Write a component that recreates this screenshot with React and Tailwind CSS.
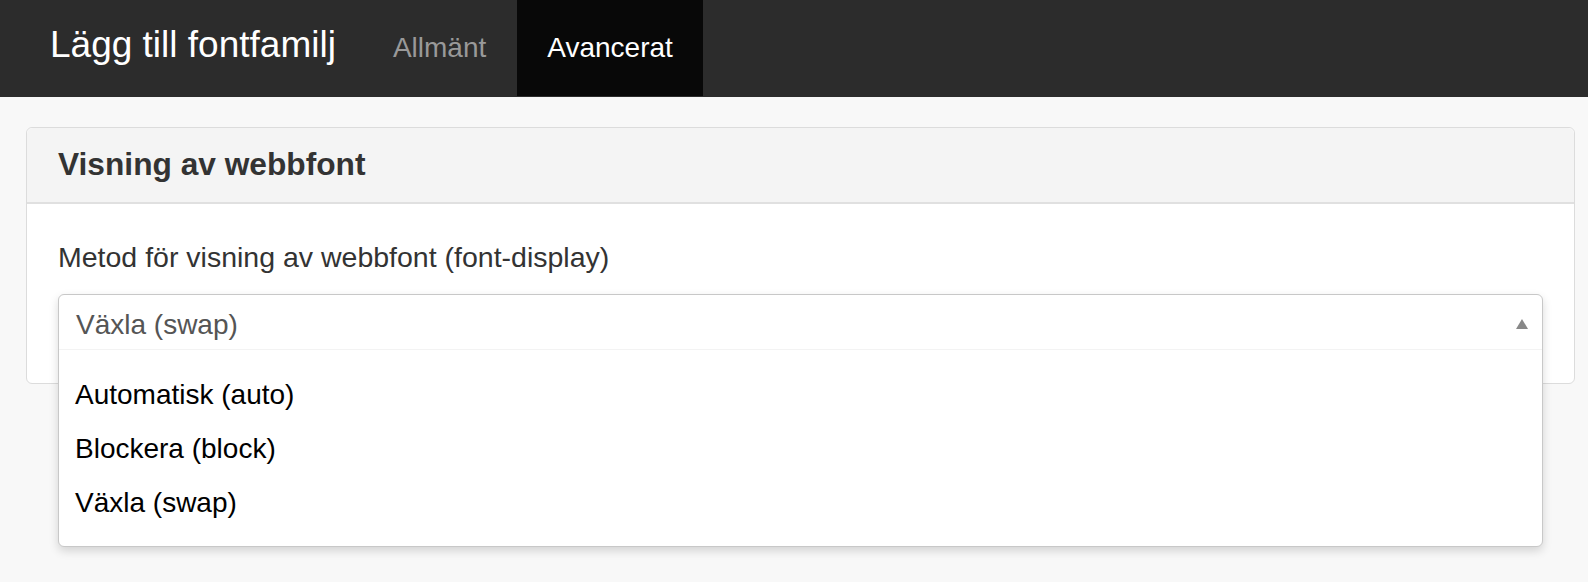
import React from 'react';

const options = ['Automatisk (auto)', 'Blockera (block)', 'Växla (swap)'];

const App = () => {
  return (
    <div className="min-h-[582px] bg-[#f8f8f8] font-['Liberation_Sans',Arial,sans-serif]">
      {/* Top bar */}
      <div className="flex h-[97px] items-stretch bg-[#2c2c2c] pb-px">
        <div className="flex items-center pl-[50px] pr-[34px] pb-[6px] text-[37px] text-white">
          Lägg till fontfamilj
        </div>
        <div className="flex items-center pl-[23px] pr-[31px] text-[28px] text-[#999]">Allmänt</div>
        <div className="flex items-center bg-[#080808] px-[30px] text-[28px] text-white">Avancerat</div>
      </div>

      {/* Panel */}
      <div className="pl-[26px] pr-[13px] pt-[30px]">
        <div className="rounded-[6px] border border-[#dcdcdc] bg-white">
          <div className="flex h-[76px] items-center rounded-t-[6px] border-b-2 border-[#e0e0e0] bg-[#f4f4f4] px-[31px] text-[31.7px] font-bold text-[#333]">
            Visning av webbfont
          </div>
          <div className="px-[31px] pt-[33px] pb-[33px]">
            <div className="text-[28.5px] leading-[40px] text-[#333]">
              Metod för visning av webbfont (font-display)
            </div>
            <div className="relative mt-[17px] h-[56px]">
              <div className="absolute top-0 left-0 right-0 z-10 rounded-[6px] border border-[#c8c8c8] bg-white shadow-[0_4px_10px_rgba(0,0,0,0.15)]">
                <div className="flex h-[55px] items-start justify-between border-b border-[#f3f3f3] pl-[17px] pr-[14px] pt-[14px]">
                  <span className="text-[28px] leading-[32px] text-[#555]">Växla (swap)</span>
                  <svg width="12" height="10" viewBox="0 0 12 10" className="mt-[10px]">
                    <path d="M6 0 L12 10 L0 10 Z" fill="#888" />
                  </svg>
                </div>
                <ul className="pt-[18px] pb-[16px]">
                  {options.map((o) => (
                    <li key={o} className="flex h-[54px] items-center pl-[16px] text-[28px] text-black">
                      {o}
                    </li>
                  ))}
                </ul>
              </div>
            </div>
          </div>
        </div>
      </div>
    </div>
  );
};

export default App;
